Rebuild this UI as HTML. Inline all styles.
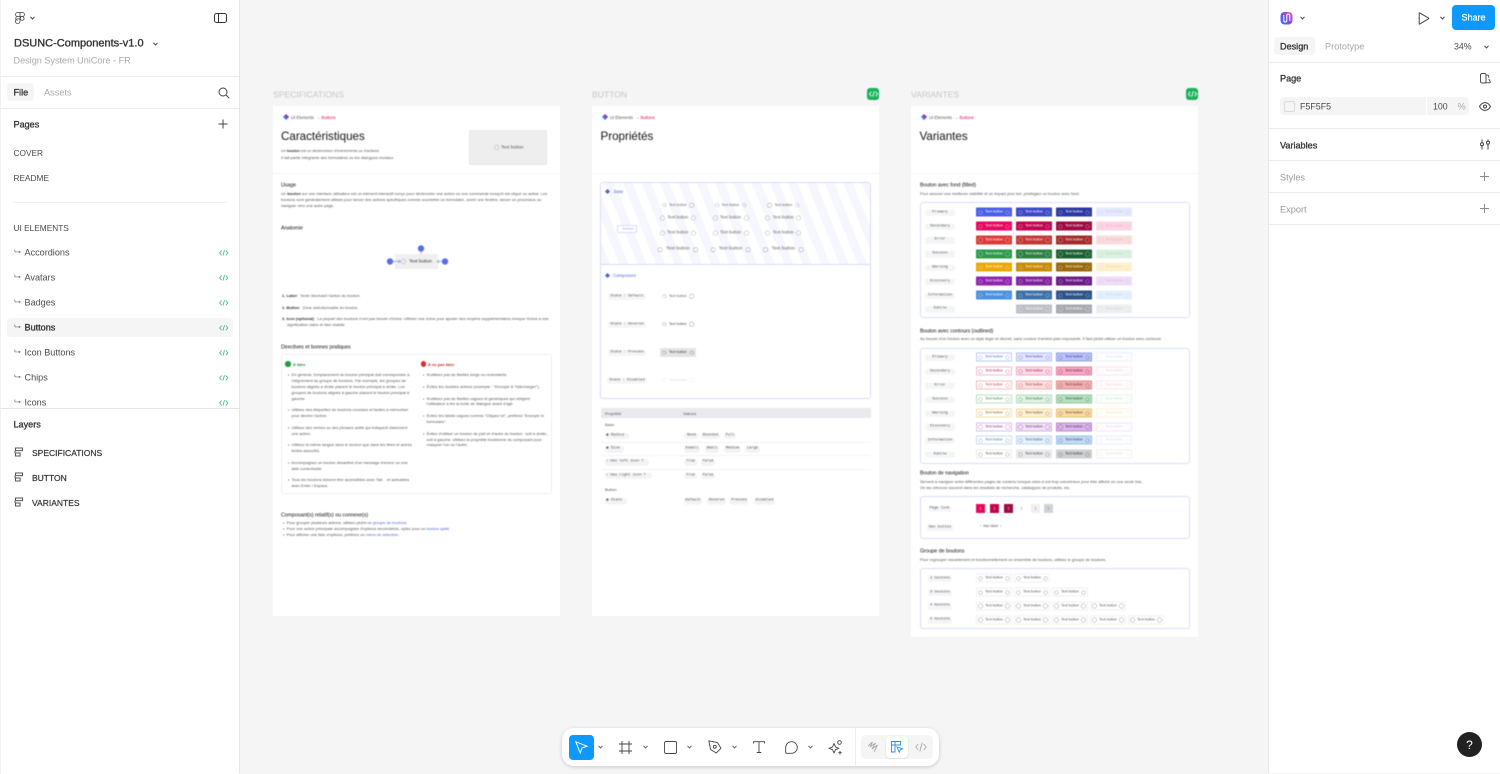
<!DOCTYPE html>
<html lang="fr"><head><meta charset="utf-8"><title>DSUNC-Components-v1.0</title>
<style>
html,body{margin:0;padding:0;width:1500px;height:773px;overflow:hidden;background:#f5f5f5;font-family:"Liberation Sans",sans-serif;color:#333}
.t{position:absolute;white-space:nowrap;line-height:1;transform:translateY(-50%)}
.a{position:absolute}
svg{position:absolute;overflow:visible;fill:none}
.panel{position:absolute;top:0;background:#fff;height:773px}
.hl{position:absolute;background:#ebebeb;height:1px}
.n{font-size:9.1px;color:#4a4a4a;margin-top:.8px}
.u{font-size:8.3px;color:#4a4a4a;margin-top:.8px}
.h{font-size:9.1px;color:#333;-webkit-text-stroke:.3px #333;margin-top:.8px}
.g{font-size:9.2px;color:#aaa;margin-top:.8px}
.lay{font-size:8.5px;color:#333;-webkit-text-stroke:.2px #333;margin-top:.8px}
#fr{position:absolute;left:0;top:0;width:1500px;height:773px;filter:blur(.4px)}
#ui{position:absolute;left:0;top:0;width:1500px;height:773px;filter:blur(.2px)}
.f{position:absolute;background:#fff;top:106px;width:287px}
.lab{font-size:8.6px;color:#c6c6c6;margin-top:.4px}
.s{font-size:4px;color:#555;margin-top:.8px}
.bc{font-size:4.2px;color:#555;margin-top:.5px}
.s2{font-size:5.2px;color:#333;-webkit-text-stroke:.08px #333;margin-top:.8px}
.ti{font-size:11.6px;color:#222;-webkit-text-stroke:.05px #222}
.s em{font-style:normal;color:#5566dd}
.s strong{color:#333}
.box{position:absolute;border:1px solid #d8ddfb;border-radius:3px;box-sizing:border-box}
.c{position:absolute;background:#f4f5f7;border-radius:2px;height:6.6px;text-align:center;font:3.7px/6.6px "Liberation Mono",monospace;color:#555;transform:translateY(-50%);white-space:nowrap;margin-top:.5px}
.r{position:absolute;left:976px;display:flex;gap:4px;height:9px;transform:translateY(-50%);margin-top:.4px}
.r b{width:36px;height:9px;box-sizing:border-box;display:flex;align-items:center;justify-content:center;gap:2.3px;font:normal 3.65px/9px "Liberation Sans",sans-serif;white-space:nowrap;border-radius:.5px}
.r b::before,.r b::after,.q::before,.q::after,.ring{content:"";box-sizing:border-box;width:4.4px;height:4.4px;border-radius:50%;opacity:.6;flex:none;background:radial-gradient(circle closest-side,transparent 76%,currentColor 80%,currentColor 94%,transparent 100%)}
.q{position:absolute;display:flex;align-items:center;justify-content:center;gap:2.7px;transform:translate(-50%,-50%);white-space:nowrap;color:#666;font-size:3.6px;line-height:1;margin-top:.3px}
.q2{font-size:4.3px;gap:2.5px}.q2::before,.q2::after{width:5px;height:5px}
.q3{font-size:4.8px;gap:3.2px}.q3::before,.q3::after{width:5.5px;height:5.5px}
.wh b{color:#fff}
.gr{gap:2px}
.gr b{border:1px solid #f1f1f1;color:#555}
.tag{position:absolute;background:#f3f3f5;border-radius:3px;height:6.6px;font:3.7px/6.6px "Liberation Mono",monospace;color:#555;text-align:center;transform:translateY(-50%);white-space:nowrap;margin-top:.3px}
.tl{text-align:left;padding-left:1px;box-sizing:border-box}
.sq{position:absolute;width:9px;height:9px;top:504px;border-radius:.5px}
</style></head><body>
<svg width="0" height="0" style="position:absolute"><defs>
<symbol id="code" viewBox="0 0 10 6"><path d="M2.800.5.700 3l2.100 2.500M7.200.5 9.300 3 7.200 5.500M5.800.2 4.200 5.800" stroke="#45b877" stroke-width=".9" fill="none"/></symbol>
<symbol id="br" viewBox="0 0 8 6"><path d="M.8.500v1.700c0 .6.400 1 1 1H6.500M5.200 2.200l1.500 1-1.500 1" stroke="#777" stroke-width=".8" fill="none"/></symbol>
<symbol id="ly" viewBox="0 0 10 10"><path d="M1.500 1h7v2.600h-7zM1.500 6h4.600v3H1.500zM1 3.600V6" stroke="#555" stroke-width="1" fill="none"/></symbol>
</defs></svg>

<div id="fr">
<div class="t lab" style="left:273px;top:94.500px">SPECIFICATIONS</div>
<div class="t lab" style="left:592px;top:94.500px">BUTTON</div>
<div class="t lab" style="left:911px;top:94.500px">VARIANTES</div>
<div class="a" style="left:867px;top:88px;width:12px;height:12px;background:#18b25a;border-radius:3px"></div>
<svg style="left:868.500px;top:91px" width="9" height="6" viewBox="0 0 9 6"><path d="M2.300.600.500 3l1.800 2.400M6.700.600 8.500 3 6.700 5.400M5.300.300 3.700 5.700" stroke="#fff" stroke-width=".9"/></svg>
<div class="a" style="left:1186px;top:88px;width:12px;height:12px;background:#18b25a;border-radius:3px"></div>
<svg style="left:1187.500px;top:91px" width="9" height="6" viewBox="0 0 9 6"><path d="M2.300.600.500 3l1.800 2.400M6.700.600 8.500 3 6.700 5.400M5.300.300 3.700 5.700" stroke="#fff" stroke-width=".9"/></svg>

<div class="f" style="left:273px;height:510px"></div>
<div class="f" style="left:592px;height:510px"></div>
<div class="f" style="left:911px;height:531px"></div>
<div class="hl" style="left:273px;top:173px;width:287px;background:#f5f5f5"></div>
<div class="hl" style="left:592px;top:173px;width:287px;background:#f5f5f5"></div>
<div class="hl" style="left:911px;top:173px;width:287px;background:#f5f5f5"></div>

<svg style="left:282.500px;top:114px" width="6" height="6" viewBox="0 0 6 6"><path d="M3 0 6 3 3 6 0 3z" fill="#5b4fe0"/><path d="M3 0 6 3 3 3z" fill="#e8206f"/><path d="M0 3h3v3z" fill="#28a8e8"/></svg>
<div class="t bc" style="left:291px;top:117px">UI Elements &nbsp;→ <span style="color:#e8065f">Buttons</span></div>
<svg style="left:601.500px;top:114px" width="6" height="6" viewBox="0 0 6 6"><path d="M3 0 6 3 3 6 0 3z" fill="#5b4fe0"/><path d="M3 0 6 3 3 3z" fill="#e8206f"/><path d="M0 3h3v3z" fill="#28a8e8"/></svg>
<div class="t bc" style="left:610px;top:117px">UI Elements &nbsp;→ <span style="color:#e8065f">Buttons</span></div>
<svg style="left:920.500px;top:114px" width="6" height="6" viewBox="0 0 6 6"><path d="M3 0 6 3 3 6 0 3z" fill="#5b4fe0"/><path d="M3 0 6 3 3 3z" fill="#e8206f"/><path d="M0 3h3v3z" fill="#28a8e8"/></svg>
<div class="t bc" style="left:929px;top:117px">UI Elements &nbsp;→ <span style="color:#e8065f">Buttons</span></div>

<div class="t ti" style="left:281px;top:136.800px">Caractéristiques</div>
<div class="t ti" style="left:600.500px;top:136.800px">Propriétés</div>
<div class="t ti" style="left:919.500px;top:136.800px">Variantes</div>

<div class="t s" style="left:281px;top:151px;font-size:3.800px">Un <strong>bouton</strong> est un déclencheur d'événements ou d'actions.</div>
<div class="t s" style="left:281px;top:157px">Il fait partie intégrante des formulaires ou les dialogues modaux.</div>
<div class="a" style="left:469px;top:130px;width:78px;height:35px;background:#eee;border:1px solid #e8e8e8;border-radius:2px;box-sizing:border-box"></div>
<div class="a ring" style="left:493.500px;top:145px;width:5px;height:5px;color:#666"></div>
<div class="t s" style="left:501px;top:147.500px;font-size:4.600px">Text button</div>

<div class="t s2" style="left:281px;top:185px">Usage</div>
<div class="t s" style="left:281px;top:193px">Un <strong>bouton</strong> sur une interface utilisateur est un élément interactif conçu pour déclencher une action ou une commande lorsqu'il est cliqué ou activé. Les</div>
<div class="t s" style="left:281px;top:199px">boutons sont généralement utilisés pour lancer des actions spécifiques comme soumettre un formulaire, ouvrir une fenêtre, lancer un processus ou</div>
<div class="t s" style="left:281px;top:205px">naviguer vers une autre page.</div>
<div class="t s2" style="left:281px;top:228px">Anatomie</div>

<div class="a" style="left:395px;top:254px;width:43px;height:15px;background:#f0f0f0"></div>
<div class="a ring" style="left:401px;top:259px;width:5.400px;height:5.400px;color:#666"></div>
<div class="t s" style="left:409px;top:261px;font-size:4.700px;color:#333">Text button</div>
<svg style="left:385px;top:243px" width="65" height="24" viewBox="0 0 65 24"><g fill="#5b6ee8"><circle cx="5" cy="18.500" r="3.200"/><circle cx="36" cy="5.500" r="3.200"/><circle cx="60" cy="18.500" r="3.200"/></g><path d="M8 18.500h7.500M13.500 17l2 1.500-2 1.500M52 18.500h5M54 17l-2 1.500 2 1.500M36 8.500V11" stroke="#5b6ee8" stroke-width=".5"/></svg>

<div class="t s" style="left:282px;top:295px"><strong>1. Label</strong> : Texte décrivant l'action du bouton.</div>
<div class="t s" style="left:282px;top:307px"><strong>2. Button</strong> : Zone sélectionnable du bouton.</div>
<div class="t s" style="left:282px;top:318px"><strong>3. Icon (optional)</strong> : La plupart des boutons n'ont pas besoin d'icône. Utilisez une icône pour ajouter des moyens supplémentaires lorsque l'icône a une</div>
<div class="t s" style="left:287px;top:324px">signification claire et bien établie.</div>
<div class="t s2" style="left:281px;top:347px">Directives et bonnes pratiques</div>

<div class="box" style="left:281px;top:354px;width:271px;height:140px;border-color:#eee"></div>
<div class="a" style="left:285.300px;top:361.300px;width:5.400px;height:5.400px;background:#1f9d3f;border-radius:50%"></div>
<div class="t s" style="left:293px;top:364px;color:#1f8a3a;font-weight:bold">À faire</div>
<div class="a" style="left:420.500px;top:361.300px;width:5.400px;height:5.400px;background:#d63030;border-radius:50%"></div>
<div class="t s" style="left:428px;top:364px;color:#c8202a;font-weight:bold">À ne pas faire</div>

<div class="t s" style="left:288px;top:374px">•&nbsp; En général, l'emplacement du bouton principal doit correspondre à</div>
<div class="t s" style="left:291.500px;top:380px">l'alignement du groupe de boutons. Par exemple, les groupes de</div>
<div class="t s" style="left:291.500px;top:386px">boutons alignés à droite placent le bouton principal à droite. Les</div>
<div class="t s" style="left:291.500px;top:392px">groupes de boutons alignés à gauche placent le bouton principal à</div>
<div class="t s" style="left:291.500px;top:398px">gauche.</div>
<div class="t s" style="left:288px;top:409px">•&nbsp; Utilisez des étiquettes de boutons concises et faciles à mémoriser</div>
<div class="t s" style="left:291.500px;top:415px">pour décrire l'action.</div>
<div class="t s" style="left:288px;top:427px">•&nbsp; Utilisez des verbes ou des phrases actifs qui indiquent clairement</div>
<div class="t s" style="left:291.500px;top:433px">une action.</div>
<div class="t s" style="left:288px;top:444px">•&nbsp; Utilisez la même langue dans le bouton que dans les titres et autres</div>
<div class="t s" style="left:291.500px;top:450px">textes associés.</div>
<div class="t s" style="left:288px;top:462px">•&nbsp; Accompagnez un bouton désactivé d'un message d'erreur ou une</div>
<div class="t s" style="left:291.500px;top:468px">aide contextuelle.</div>
<div class="t s" style="left:288px;top:479px">•&nbsp; Tous les boutons doivent être accessibles avec Tab &nbsp;&nbsp; et activables</div>
<div class="t s" style="left:291.500px;top:485px">avec Enter / Espace.</div>

<div class="t s" style="left:423px;top:374px">•&nbsp; N'utilisez pas de libellés longs ou redondants.</div>
<div class="t s" style="left:423px;top:386px">•&nbsp; Évitez les doubles actions (exemple : "Envoyer &amp; Télécharger").</div>
<div class="t s" style="left:423px;top:398px">•&nbsp; N'utilisez pas de libellés vagues et génériques qui obligent</div>
<div class="t s" style="left:426.500px;top:403.500px">l'utilisateur à lire la boîte de dialogue avant d'agir.</div>
<div class="t s" style="left:423px;top:415px">•&nbsp; Évitez les labels vagues comme "Cliquez ici", préférez "Envoyer le</div>
<div class="t s" style="left:426.500px;top:421px">formulaire".</div>
<div class="t s" style="left:423px;top:433px">•&nbsp; Évitez d'utiliser un bouton de part et d'autre du bouton : soit à droite,</div>
<div class="t s" style="left:426.500px;top:439px">soit à gauche. Utilisez la propriété booléenne du composant pour</div>
<div class="t s" style="left:426.500px;top:444.500px">masquer l'un ou l'autre.</div>

<div class="t s2" style="left:281px;top:515px">Composant(s) relatif(s) ou connexe(s)</div>
<div class="t s" style="left:283px;top:522.500px">•&nbsp; Pour grouper plusieurs actions, utilisez plutôt un <em>groupe de boutons</em>.</div>
<div class="t s" style="left:283px;top:528.500px">•&nbsp; Pour une action principale accompagnée d'options secondaires, optez pour un <em>bouton splité</em>.</div>
<div class="t s" style="left:283px;top:534px">•&nbsp; Pour afficher une liste d'options, préférez un <em>menu de sélection</em>.</div>

<!-- FRAME 2 -->
<div class="box" style="left:600px;top:182px;width:271px;height:217px;overflow:hidden;background:#fff">
<div class="a" style="left:0;top:0;width:271px;height:82px;box-sizing:border-box;background:repeating-linear-gradient(68deg,#f5f6fe 0,#f5f6fe 8.500px,#fff 8.500px,#fff 17px);border-bottom:1px solid #d5dbfa"></div>
</div>
<svg style="left:604.500px;top:188.500px" width="5" height="5" viewBox="0 0 5 5"><path d="M2.500 0 5 2.500 2.500 5 0 2.500z" fill="#4a5ee8"/></svg>
<div class="t s" style="left:613px;top:191px;color:#5566dd;font-size:4.200px">.base</div>
<div class="a" style="left:617px;top:225px;width:20px;height:8px;background:#fff;border:1px solid #d5dbfa;border-radius:2px;box-sizing:border-box"></div>
<div class="t" style="left:621px;top:229.300px;font:3px 'Liberation Mono',monospace;color:#7080e0">.button</div>
<div class="q" style="left:677.800px;top:205px">Text button</div><div class="q" style="left:730.500px;top:205px">Text button</div><div class="q" style="left:783.300px;top:205px">Text button</div>
<div class="q q2" style="left:677.800px;top:217.500px">Text button</div><div class="q q2" style="left:730.500px;top:217.500px">Text button</div><div class="q q2" style="left:783.300px;top:217.500px">Text button</div>
<div class="q q2" style="left:677.800px;top:232.500px">Text button</div><div class="q q2" style="left:730.500px;top:232.500px">Text button</div><div class="q q2" style="left:783.300px;top:232.500px">Text button</div>
<div class="q q3" style="left:677.800px;top:249.700px">Text button</div><div class="q q3" style="left:730.500px;top:249.700px">Text button</div><div class="q q3" style="left:783.300px;top:249.700px">Text button</div>
<svg style="left:604.500px;top:272.500px" width="5" height="5" viewBox="0 0 5 5"><path d="M2.500 0 5 2.500 2.500 5 0 2.500z" fill="#4a5ee8"/></svg>
<div class="t s" style="left:613px;top:275px;color:#5566dd;font-size:4.400px">Component</div>
<div class="c" style="left:608px;top:296px;width:38px">State : Default</div>
<div class="c" style="left:608px;top:324px;width:38px">State : Hovered</div>
<div class="c" style="left:608px;top:352px;width:38px">State : Pressed</div>
<div class="c" style="left:607px;top:380px;width:40px">State : Disabled</div>
<div class="q" style="left:677.800px;top:296px">Text button</div>
<div class="q" style="left:677.800px;top:324px;color:#444">Text button</div>
<div class="a" style="left:660px;top:348px;width:36px;height:9px;background:#e4e4e6;border-radius:.5px"></div>
<div class="q" style="left:677.800px;top:352.500px;color:#333">Text button</div>
<div class="q" style="left:677.800px;top:380px;color:#ddd">Text button</div>

<div class="a" style="left:601px;top:408px;width:270px;height:10px;background:#e8eaee"></div>
<div class="t s" style="left:605px;top:413px">Propriété</div>
<div class="t s" style="left:683px;top:413px">Valeurs</div>
<div class="t s" style="left:605px;top:424px">Base</div>
<div class="t s" style="left:605px;top:489.500px">Button</div>
<div class="hl" style="left:601px;top:442px;width:270px;background:#f3f3f3"></div>
<div class="hl" style="left:601px;top:455px;width:270px;background:#f3f3f3"></div>
<div class="hl" style="left:601px;top:468.500px;width:270px;background:#f3f3f3"></div>
<div class="tag tl" style="left:605px;top:435.300px;width:24px">◆ Radius</div>
<div class="tag tl" style="left:605px;top:448.700px;width:19px">◆ Size</div>
<div class="tag tl" style="left:605px;top:462px;width:44px">○ Has left icon ?</div>
<div class="tag tl" style="left:605px;top:475.300px;width:47px">○ Has right icon ?</div>
<div class="tag tl" style="left:605px;top:500.700px;width:22px">◆ State</div>
<div class="tag" style="left:684px;top:435.300px;width:15px">None</div><div class="tag" style="left:701px;top:435.300px;width:19px">Rounded</div><div class="tag" style="left:724px;top:435.300px;width:12px">Full</div>
<div class="tag" style="left:684px;top:448.700px;width:16px">Xsmall</div><div class="tag" style="left:705px;top:448.700px;width:14px">Small</div><div class="tag" style="left:724px;top:448.700px;width:17px">Medium</div><div class="tag" style="left:745px;top:448.700px;width:15px">Large</div>
<div class="tag" style="left:684px;top:462px;width:13px">True</div><div class="tag" style="left:701px;top:462px;width:14px">False</div>
<div class="tag" style="left:684px;top:475.300px;width:13px">True</div><div class="tag" style="left:701px;top:475.300px;width:14px">False</div>
<div class="tag" style="left:684px;top:500.700px;width:18px">Default</div><div class="tag" style="left:707px;top:500.700px;width:19px">Hovered</div><div class="tag" style="left:730px;top:500.700px;width:18px">Pressed</div><div class="tag" style="left:754px;top:500.700px;width:21px">Disabled</div>

<!-- FRAME 3 -->
<div class="t s2" style="left:920px;top:185px">Bouton avec fond (filled)</div>
<div class="t s" style="left:920px;top:193px">Pour assurer une meilleure visibilité et un impact plus fort, privilégiez un bouton avec fond.</div>
<div class="box" style="left:920px;top:202px;width:270px;height:116px"></div>
<div class="c" style="left:925px;top:212px;width:30px">Primary</div><div class="c" style="left:925px;top:226px;width:30px">Secondary</div><div class="c" style="left:925px;top:239.500px;width:30px">Error</div><div class="c" style="left:925px;top:253.500px;width:30px">Success</div><div class="c" style="left:925px;top:267px;width:30px">Warning</div><div class="c" style="left:925px;top:281px;width:30px">Discovery</div><div class="c" style="left:925px;top:295px;width:30px">Information</div><div class="c" style="left:925px;top:308.500px;width:30px">Subtle</div>

<div class="r wh" style="top:212px"><b style="background:#4a5ee8">Text button</b><b style="background:#3a48c8">Text button</b><b style="background:#2b37a2">Text button</b><b style="background:#e6e8fd;color:#c4c9f6">Text button</b></div>
<div class="r wh" style="top:226px"><b style="background:#e8065f">Text button</b><b style="background:#c2044f">Text button</b><b style="background:#9e0a42">Text button</b><b style="background:#fbd5e3;color:#f5afc8">Text button</b></div>
<div class="r wh" style="top:239.500px"><b style="background:#dc3a3a">Text button</b><b style="background:#c53535">Text button</b><b style="background:#a32a2a">Text button</b><b style="background:#f9dcdc;color:#efb5b5">Text button</b></div>
<div class="r wh" style="top:253.500px"><b style="background:#2a9a4a">Text button</b><b style="background:#2a8043">Text button</b><b style="background:#1a6030">Text button</b><b style="background:#dcf0e0;color:#aedcb8">Text button</b></div>
<div class="r wh" style="top:267px"><b style="background:#eba806">Text button</b><b style="background:#c98a06">Text button</b><b style="background:#99690a">Text button</b><b style="background:#fdf0cf;color:#f4d98e">Text button</b></div>
<div class="r wh" style="top:281px"><b style="background:#9024b0">Text button</b><b style="background:#80209d">Text button</b><b style="background:#6a1a85">Text button</b><b style="background:#efdcf5;color:#d8b4e4">Text button</b></div>
<div class="r wh" style="top:295px"><b style="background:#4a90e0">Text button</b><b style="background:#3c70a8">Text button</b><b style="background:#2c5288">Text button</b><b style="background:#e4f0fc;color:#bcd8f4">Text button</b></div>
<div class="r wh" style="top:308.500px;left:1016px"><b style="background:#bcbec6">Text button</b><b style="background:#a5a8b0">Text button</b><b style="background:#eeeff1;color:#cfd0d4">Text button</b></div>

<div class="t s2" style="left:920px;top:331px">Bouton avec contours (outlined)</div>
<div class="t s" style="left:920px;top:338.500px">Au besoin d'un bouton avec un style léger et discret, sans couleur d'arrière-plan imposante, il faut plutôt utiliser un bouton avec contours.</div>
<div class="box" style="left:920px;top:348px;width:270px;height:116px"></div>
<div class="c" style="left:925px;top:357px;width:30px">Primary</div><div class="c" style="left:925px;top:371px;width:30px">Secondary</div><div class="c" style="left:925px;top:385px;width:30px">Error</div><div class="c" style="left:925px;top:399px;width:30px">Success</div><div class="c" style="left:925px;top:413px;width:30px">Warning</div><div class="c" style="left:925px;top:426.500px;width:30px">Discovery</div><div class="c" style="left:925px;top:440px;width:30px">Information</div><div class="c" style="left:925px;top:454px;width:30px">Subtle</div>

<div class="r" style="top:357px"><b style="border:1px solid #c0c7f5;color:#4a5ee8;background:#fff">Text button</b><b style="border:1px solid #b5bdf3;color:#3a48c8;background:#e4e7fb">Text button</b><b style="border:1px solid #8f9bec;color:#2b37a2;background:#bcc3f3">Text button</b><b style="border:1px solid #eceefb;color:#d6daf8;background:#fff">Text button</b></div>
<div class="r" style="top:371px"><b style="border:1px solid #f6b6cd;color:#d0054f;background:#fff">Text button</b><b style="border:1px solid #f5a8c4;color:#a80344;background:#fbdce8">Text button</b><b style="border:1px solid #ea7ba4;color:#800636;background:#f3a9c4">Text button</b><b style="border:1px solid #fbe4ec;color:#f8c4d6;background:#fff">Text button</b></div>
<div class="r" style="top:385px"><b style="border:1px solid #f3bcbc;color:#c53535;background:#fff">Text button</b><b style="border:1px solid #f0b0b0;color:#a82c2c;background:#fbe0e0">Text button</b><b style="border:1px solid #e08a8a;color:#7e1f1f;background:#f1b0b0">Text button</b><b style="border:1px solid #fbe8e8;color:#f5cccc;background:#fff">Text button</b></div>
<div class="r" style="top:399px"><b style="border:1px solid #b8e0c2;color:#2a8043;background:#fff">Text button</b><b style="border:1px solid #b0dcbc;color:#1f6a37;background:#e2f3e6">Text button</b><b style="border:1px solid #8bc99b;color:#14502a;background:#b8e0c2">Text button</b><b style="border:1px solid #e4f4e8;color:#c0e4c8;background:#fff">Text button</b></div>
<div class="r" style="top:413px"><b style="border:1px solid #f7dfa4;color:#8a6208;background:#fff">Text button</b><b style="border:1px solid #f5d898;color:#6e4f08;background:#fdf1d6">Text button</b><b style="border:1px solid #e8c070;color:#55400a;background:#f8dca4">Text button</b><b style="border:1px solid #fcf1d8;color:#f8e4b0;background:#fff">Text button</b></div>
<div class="r" style="top:426.500px"><b style="border:1px solid #dfbde9;color:#80209d;background:#fff">Text button</b><b style="border:1px solid #d8aee4;color:#6a1a85;background:#f2e2f7">Text button</b><b style="border:1px solid #bb84cd;color:#4f1265;background:#dbb8e6">Text button</b><b style="border:1px solid #f1e4f5;color:#e2ccea;background:#fff">Text button</b></div>
<div class="r" style="top:440px"><b style="border:1px solid #c4dcf5;color:#3c70a8;background:#fff">Text button</b><b style="border:1px solid #bcd8f4;color:#2c5288;background:#e6f1fc">Text button</b><b style="border:1px solid #98bfe8;color:#234070;background:#c4dbf5">Text button</b><b style="border:1px solid #e8f1fb;color:#cfe1f6;background:#fff">Text button</b></div>
<div class="r" style="top:454px"><b style="border:1px solid #eaeaec;color:#555;background:#fff">Text button</b><b style="border:1px solid #e8e8ea;color:#444;background:#eaeaec">Text button</b><b style="border:1px solid #cfcfd3;color:#333;background:#cfd0d4">Text button</b><b style="border:1px solid #f0f0f2;color:#ddd;background:#fff">Text button</b></div>

<div class="t s2" style="left:920px;top:473px">Bouton de navigation</div>
<div class="t s" style="left:920px;top:481px">Servent à naviguer entre différentes pages de contenu lorsque celui-ci est trop volumineux pour être affiché en une seule fois.</div>
<div class="t s" style="left:920px;top:487px">On les retrouve souvent dans les résultats de recherche, catalogues de produits, etc.</div>
<div class="box" style="left:920px;top:496px;width:270px;height:43px"></div>
<div class="c" style="left:928px;top:508px;width:23px">Page link</div>
<div class="c" style="left:927px;top:527px;width:26px">Nav button</div>
<div class="sq" style="left:976px;background:#e8065f"></div><div class="sq" style="left:990px;background:#c2044f"></div><div class="sq" style="left:1004px;background:#9e0a42"></div>
<div class="t" style="left:1020.500px;top:508.500px;font-size:3.500px;color:#666">1</div>
<div class="sq" style="left:1031px;background:#f0f0f2"></div><div class="sq" style="left:1044px;background:#d0d2d6"></div>
<div class="t" style="left:979.500px;top:508.500px;font-size:3.500px;color:#fff">1</div><div class="t" style="left:993.500px;top:508.500px;font-size:3.500px;color:#fff">1</div><div class="t" style="left:1007.500px;top:508.500px;font-size:3.500px;color:#fff">1</div><div class="t" style="left:1034.500px;top:508.500px;font-size:3.500px;color:#777">1</div><div class="t" style="left:1047.500px;top:508.500px;font-size:3.500px;color:#777">1</div>
<div class="t s" style="left:980px;top:526.500px;font-size:3.600px">‹ &nbsp;Nav label &nbsp;›</div>

<div class="t s2" style="left:920px;top:551px">Groupe de boutons</div>
<div class="t s" style="left:920px;top:559px">Pour regrouper visuellement et fonctionnellement un ensemble de boutons, utilisez le groupe de boutons.</div>
<div class="box" style="left:920px;top:568px;width:270px;height:61px"></div>
<div class="c" style="left:928px;top:578px;width:24px">2 boutons</div><div class="c" style="left:928px;top:592px;width:24px">3 boutons</div><div class="c" style="left:928px;top:605.500px;width:24px">4 boutons</div><div class="c" style="left:928px;top:619.500px;width:24px">5 boutons</div>
<div class="r gr" style="top:578px"><b>Text button</b><b>Text button</b></div>
<div class="r gr" style="top:592px"><b>Text button</b><b>Text button</b><b>Text button</b></div>
<div class="r gr" style="top:605.500px"><b>Text button</b><b>Text button</b><b>Text button</b><b>Text button</b></div>
<div class="r gr" style="top:619.500px"><b>Text button</b><b>Text button</b><b>Text button</b><b>Text button</b><b>Text button</b></div>
</div>

<div id="ui">
<!-- LEFT PANEL -->
<div class="panel" style="left:0;width:240px;border-right:1px solid #e6e6e6;border-left:1px solid #f0f0f0;box-sizing:border-box"></div>
<svg style="left:15px;top:12px" width="10" height="12" viewBox="0 0 10 12"><path d="M2.600.500H7.400a2 2 0 0 1 0 4H2.600a2 2 0 0 1 0-4zM5 .500v8.700a2.300 2.300 0 1 1-2.400-2.300H5M2.600 4.500h2.400M2.600 4.500a1.900 1.900 0 0 0 0 3.800M7.200 4.500a1.900 1.900 0 1 1 0 3.800 1.900 1.900 0 0 1 0-3.800z" stroke="#444" stroke-width=".8"/></svg>
<svg style="left:30px;top:16px" width="5" height="4" viewBox="0 0 5 4"><path d="M.500.800 2.500 3 4.500.800" stroke="#444"/></svg>
<svg style="left:214px;top:13px" width="13" height="10" viewBox="0 0 13 10"><rect x=".500" y=".500" width="12" height="9" rx="2" stroke="#333"/><path d="M4.500.500v9" stroke="#333"/></svg>
<div class="t" style="left:14px;top:43.500px;font-size:11px;color:#333;-webkit-text-stroke:.35px #333;margin-top:.6px">DSUNC-Components-v1.0</div>
<svg style="left:153px;top:41.500px" width="5" height="4" viewBox="0 0 5 4"><path d="M.500.800 2.500 3 4.500.800" stroke="#444"/></svg>
<div class="t g" style="left:13.500px;top:60px;font-size:9.100px">Design System UniCore - FR</div>
<div class="hl" style="left:1px;top:76px;width:238px"></div>
<div class="a" style="left:7px;top:83px;width:27px;height:18px;background:#f5f5f5;border-radius:4px"></div>
<div class="t h" style="left:13.500px;top:92px">File</div>
<div class="t g" style="left:44px;top:92px">Assets</div>
<svg style="left:218px;top:87px" width="12" height="12" viewBox="0 0 12 12"><circle cx="5" cy="5" r="4" stroke="#444"/><path d="m8 8 3.300 3.300" stroke="#444"/></svg>
<div class="hl" style="left:1px;top:108px;width:238px"></div>
<div class="t h" style="left:13.500px;top:124.500px">Pages</div>
<svg style="left:218px;top:119px" width="10" height="10" viewBox="0 0 10 10"><path d="M5 .500v9M.500 5h9" stroke="#444"/></svg>
<div class="t u" style="left:13.500px;top:152.500px">COVER</div>
<div class="t u" style="left:13.500px;top:177.500px">README</div>
<div class="hl" style="left:13px;top:202px;width:214px;background:#eee"></div>
<div class="t u" style="left:13.500px;top:227.500px">UI ELEMENTS</div>
<div class="a" style="left:7px;top:318px;width:226px;height:19px;background:#f5f5f5;border-radius:4px"></div>
<svg style="left:14px;top:249px" width="7.500" height="5.500"><use href="#br" width="7.500" height="5.500"/></svg><div class="t n" style="left:24.500px;top:252.500px">Accordions</div><svg style="left:219px;top:250px" width="9.500" height="5.700"><use href="#code" width="9.500" height="5.700"/></svg>
<svg style="left:14px;top:274px" width="7.500" height="5.500"><use href="#br" width="7.500" height="5.500"/></svg><div class="t n" style="left:24.500px;top:277.500px">Avatars</div><svg style="left:219px;top:275px" width="9.500" height="5.700"><use href="#code" width="9.500" height="5.700"/></svg>
<svg style="left:14px;top:299px" width="7.500" height="5.500"><use href="#br" width="7.500" height="5.500"/></svg><div class="t n" style="left:24.500px;top:302.500px">Badges</div><svg style="left:219px;top:300px" width="9.500" height="5.700"><use href="#code" width="9.500" height="5.700"/></svg>
<svg style="left:14px;top:324px" width="7.500" height="5.500"><use href="#br" width="7.500" height="5.500"/></svg><div class="t h" style="left:24.500px;top:327.500px">Buttons</div><svg style="left:219px;top:325px" width="9.500" height="5.700"><use href="#code" width="9.500" height="5.700"/></svg>
<svg style="left:14px;top:349px" width="7.500" height="5.500"><use href="#br" width="7.500" height="5.500"/></svg><div class="t n" style="left:24.500px;top:352.500px">Icon Buttons</div><svg style="left:219px;top:350px" width="9.500" height="5.700"><use href="#code" width="9.500" height="5.700"/></svg>
<svg style="left:14px;top:374px" width="7.500" height="5.500"><use href="#br" width="7.500" height="5.500"/></svg><div class="t n" style="left:24.500px;top:377.500px">Chips</div><svg style="left:219px;top:375px" width="9.500" height="5.700"><use href="#code" width="9.500" height="5.700"/></svg>
<svg style="left:14px;top:399px" width="7.500" height="5.500"><use href="#br" width="7.500" height="5.500"/></svg><div class="t n" style="left:24.500px;top:402.500px">Icons</div><svg style="left:219px;top:400px" width="9.500" height="5.700"><use href="#code" width="9.500" height="5.700"/></svg>
<div class="a" style="left:1px;top:408px;width:238px;height:365px;background:#fff;border-top:1px solid #e6e6e6"></div>
<div class="t h" style="left:13.500px;top:424.500px">Layers</div>
<svg style="left:14px;top:447px" width="10" height="10"><use href="#ly" width="10" height="10"/></svg><div class="t lay" style="left:32px;top:452.500px">SPECIFICATIONS</div>
<svg style="left:14px;top:472px" width="10" height="10"><use href="#ly" width="10" height="10"/></svg><div class="t lay" style="left:32px;top:477.500px">BUTTON</div>
<svg style="left:14px;top:497px" width="10" height="10"><use href="#ly" width="10" height="10"/></svg><div class="t lay" style="left:32px;top:502.500px">VARIANTES</div>

<!-- RIGHT PANEL -->
<div class="panel" style="left:1268px;width:232px;border-left:1px solid #e6e6e6;box-sizing:border-box"></div>
<svg style="left:1280px;top:11px" width="13" height="14" viewBox="0 0 13 14"><defs><linearGradient id="lg" x1="0" y1="1" x2="1" y2="0"><stop offset="0" stop-color="#2f7bff"/><stop offset=".5" stop-color="#7a50e8"/><stop offset="1" stop-color="#f0558f"/></linearGradient></defs><rect x=".500" y="1" width="12" height="12.500" rx="4" fill="url(#lg)"/><path d="M3.800 4v5.500a1.500 1.500 0 0 0 3 0V4.500a1.500 1.500 0 0 1 3 0V10" stroke="#fff" stroke-width="1"/></svg>
<svg style="left:1300px;top:16px" width="5" height="4" viewBox="0 0 5 4"><path d="M.500.800 2.500 3 4.500.800" stroke="#444"/></svg>
<svg style="left:1418px;top:12px" width="12" height="13" viewBox="0 0 12 13"><path d="M1.200 1.200v10.600a.400.400 0 0 0 .6.300l8.700-5.300a.400.400 0 0 0 0-.7L1.800.900a.400.400 0 0 0-.6.300z" stroke="#444"/></svg>
<svg style="left:1440px;top:16px" width="5" height="4" viewBox="0 0 5 4"><path d="M.500.800 2.500 3 4.500.800" stroke="#444"/></svg>
<div class="a" style="left:1452px;top:5px;width:43px;height:25px;background:#0d99ff;border-radius:4px"></div>
<div class="t" style="left:1452px;width:43px;text-align:center;top:18.300px;font-size:9px;color:#fff;-webkit-text-stroke:.25px #fff">Share</div>
<div class="a" style="left:1274px;top:37px;width:41px;height:18px;background:#f5f5f5;border-radius:4px"></div>
<div class="t h" style="left:1280px;top:46.500px">Design</div>
<div class="t g" style="left:1325px;top:46.500px">Prototype</div>
<div class="t n" style="left:1454px;top:46.500px;font-size:8.800px">34%</div>
<svg style="left:1484px;top:44.500px" width="5" height="4" viewBox="0 0 5 4"><path d="M.500.800 2.500 3 4.500.800" stroke="#444"/></svg>
<div class="hl" style="left:1269px;top:62px;width:231px"></div>
<div class="t h" style="left:1280px;top:78.500px">Page</div>
<svg style="left:1480px;top:73px" width="11" height="11" viewBox="0 0 11 11"><rect x=".500" y=".500" width="5.500" height="9.500" rx="1.500" stroke="#444" stroke-width=".9"/><path d="M6 2.500c1.500-.8 2.700-.3 2.700 1v1.200M6 9.800h3.300a1 1 0 0 0 .9-1.400L8.700 6" stroke="#444" stroke-width=".9"/></svg>
<div class="a" style="left:1280px;top:97px;width:189px;height:18px;background:#f5f5f5;border-radius:4px"></div>
<div class="a" style="left:1426px;top:97px;width:1px;height:18px;background:#fff"></div>
<div class="a" style="left:1284px;top:101px;width:11px;height:11px;background:#f5f5f5;border:1px solid #dcdcdc;border-radius:2px;box-sizing:border-box"></div>
<div class="t n" style="left:1300px;top:106.500px;font-size:8.900px">F5F5F5</div>
<div class="t n" style="left:1433px;top:106.500px;font-size:8.800px">100</div>
<div class="t g" style="left:1457.500px;top:106.500px">%</div>
<svg style="left:1479px;top:102px" width="12" height="9" viewBox="0 0 12 9"><path d="M.500 4.500C2 1.800 4 .600 6 .600s4 1.200 5.500 3.900C10 7.200 8 8.400 6 8.400S2 7.200.500 4.500z" stroke="#444"/><circle cx="6" cy="4.500" r="1.500" stroke="#444"/></svg>
<div class="hl" style="left:1269px;top:128px;width:231px"></div>
<div class="t h" style="left:1280px;top:145px">Variables</div>
<svg style="left:1480px;top:139px" width="10" height="11" viewBox="0 0 10 11"><path d="M2 .500v3M2 7v3.500M8 .500V2M8 5.500v5" stroke="#444"/><circle cx="2" cy="5.300" r="1.500" stroke="#444"/><circle cx="8" cy="3.700" r="1.500" stroke="#444"/></svg>
<div class="hl" style="left:1269px;top:160px;width:231px"></div>
<div class="t g" style="left:1280px;top:177px;color:#999">Styles</div>
<svg style="left:1480px;top:172px" width="9" height="9" viewBox="0 0 9 9"><path d="M4.500 0v9M0 4.500h9" stroke="#888"/></svg>
<div class="hl" style="left:1269px;top:192px;width:231px"></div>
<div class="t g" style="left:1280px;top:209px;color:#999">Export</div>
<svg style="left:1480px;top:204px" width="9" height="9" viewBox="0 0 9 9"><path d="M4.500 0v9M0 4.500h9" stroke="#888"/></svg>
<div class="hl" style="left:1269px;top:224px;width:231px"></div>
<div class="a" style="left:1457px;top:732px;width:25px;height:25px;background:#222;border-radius:50%"></div>
<div class="t" style="left:1457px;width:25px;text-align:center;top:744.500px;font-size:12px;color:#fff">?</div>

<!-- TOOLBAR -->
<div class="a" style="left:562px;top:728px;width:377px;height:38px;background:#fff;border-radius:12px;box-shadow:0 1px 4px rgba(0,0,0,.18)"></div>
<div class="a" style="left:569px;top:735px;width:25px;height:24.500px;background:#0d99ff;border-radius:4px"></div>
<svg style="left:575px;top:741px" width="13" height="13" viewBox="0 0 13 13"><path d="M.800.800 12 5.200 7 7 5.200 12z" stroke="#fff" stroke-width="1"/></svg>
<svg style="left:598px;top:745px" width="5" height="4" viewBox="0 0 5 4"><path d="M.500.800 2.500 3 4.500.800" stroke="#666"/></svg>
<svg style="left:619px;top:741px" width="13" height="13" viewBox="0 0 13 13"><path d="M3 0v13M10 0v13M0 3h13M0 10h13" stroke="#444" stroke-width=".9"/></svg>
<svg style="left:643px;top:745px" width="5" height="4" viewBox="0 0 5 4"><path d="M.500.800 2.500 3 4.500.800" stroke="#666"/></svg>
<svg style="left:664px;top:741px" width="13" height="13" viewBox="0 0 13 13"><rect x=".500" y=".500" width="12" height="12" rx="1.500" stroke="#444" stroke-width=".9"/></svg>
<svg style="left:687px;top:745px" width="5" height="4" viewBox="0 0 5 4"><path d="M.500.800 2.500 3 4.500.800" stroke="#666"/></svg>
<svg style="left:708px;top:740px" width="14" height="14" viewBox="0 0 14 14"><path d="M.800.800 9.500 2.600 13 8.200 8.200 13 2.600 9.500z" stroke="#444" stroke-width=".9" stroke-linejoin="round"/><circle cx="6.800" cy="6.800" r="1.500" stroke="#444" stroke-width=".9"/></svg>
<svg style="left:732px;top:745px" width="5" height="4" viewBox="0 0 5 4"><path d="M.500.800 2.500 3 4.500.800" stroke="#666"/></svg>
<svg style="left:753px;top:741px" width="12" height="12" viewBox="0 0 12 12"><path d="M.500 2.500V.700h11v1.800M6 .700v10.800M3.800 11.500h4.400" stroke="#444" stroke-width=".9"/></svg>
<svg style="left:784.500px;top:741px" width="13" height="13" viewBox="0 0 13 13"><path d="M6.500.700a5.800 5.800 0 1 1 0 11.600H1.700a1 1 0 0 1-1-1V6.500A5.800 5.800 0 0 1 6.500.700z" stroke="#444" stroke-width=".9"/></svg>
<svg style="left:808px;top:745px" width="5" height="4" viewBox="0 0 5 4"><path d="M.500.800 2.500 3 4.500.800" stroke="#666"/></svg>
<svg style="left:828px;top:740px" width="15" height="15" viewBox="0 0 15 15"><path d="M6 3.500 7.500 7l3.300 1.300-3.300 1.400L6 13 4.500 9.700 1 8.300 4.500 7z" stroke="#444" stroke-width=".9" stroke-linejoin="round"/><circle cx="11.500" cy="2.500" r="1.800" stroke="#444" stroke-width=".9"/><path d="M12 11v3.500M10.300 12.700h3.400" stroke="#444" stroke-width=".9"/></svg>
<div class="a" style="left:854.500px;top:728px;width:1px;height:38px;background:#eee"></div>
<div class="a" style="left:861px;top:735px;width:72px;height:24px;background:#f5f5f5;border-radius:5px"></div>
<div class="a" style="left:886px;top:736px;width:22px;height:22px;background:#fff;border-radius:4px;box-shadow:0 .5px 1.500px rgba(0,0,0,.15)"></div>
<svg style="left:867px;top:741px" width="12" height="12" viewBox="0 0 12 12"><path d="M1 5 5.500 1 3 6 8.500 2 5 8l5.500-4L7 11" stroke="#aaa" stroke-width=".9"/></svg>
<svg style="left:891px;top:741px" width="12" height="12" viewBox="0 0 12 12"><path d="M.500.500h9v3.500h-9zM.500 4v7h4M4 .500V11" stroke="#2a8fe8" stroke-width=".9"/><path d="M6 6l5.500 1.800-2.300 1-1 2.400z" stroke="#2a8fe8" stroke-width=".9"/></svg>
<svg style="left:915px;top:742px" width="12" height="10" viewBox="0 0 12 10"><path d="M3.300 2 .800 5l2.500 3M8.700 2l2.500 3-2.500 3M7.200.500 4.800 9.500" stroke="#aaa" stroke-width=".9"/></svg>
</div>
</body></html>
